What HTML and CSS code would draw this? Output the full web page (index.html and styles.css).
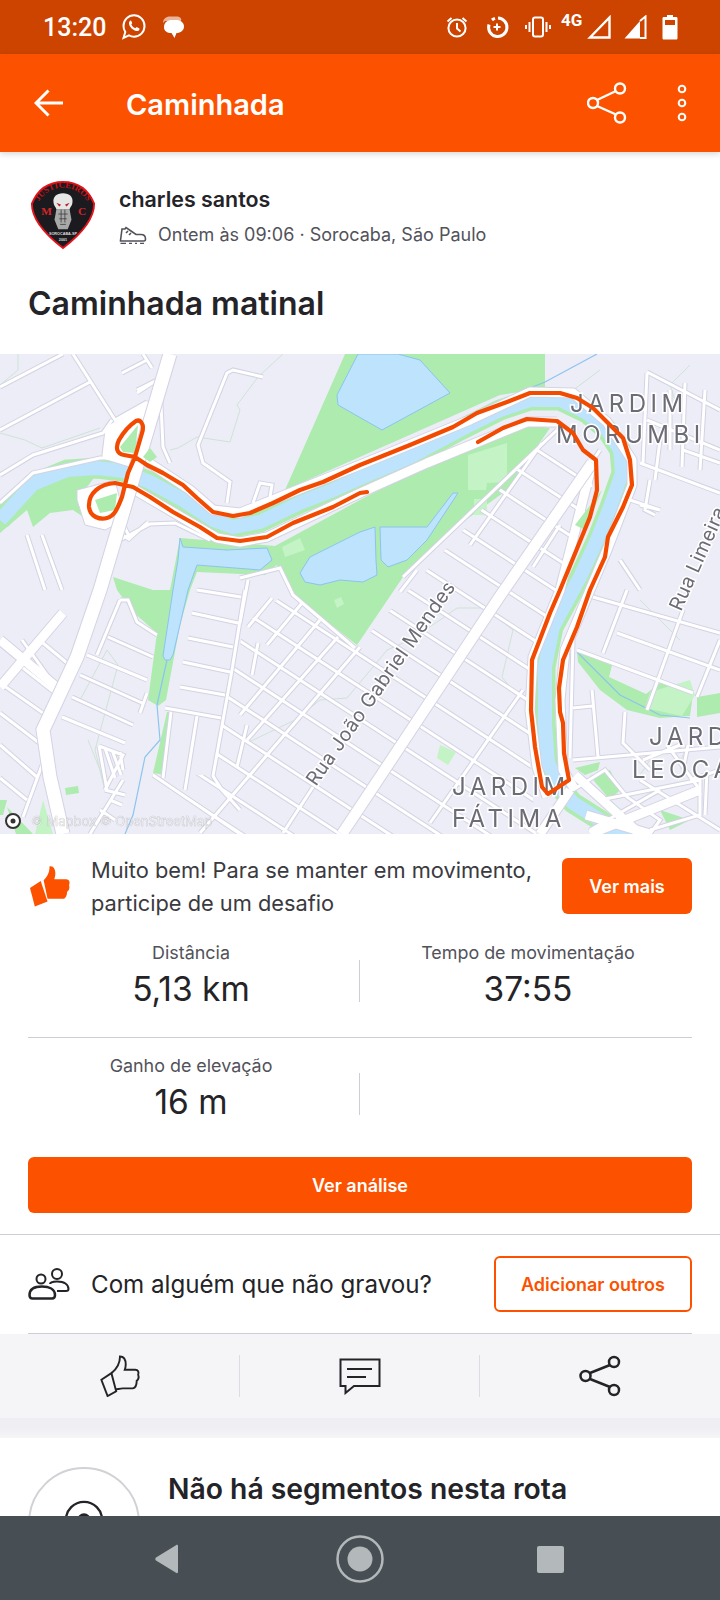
FILE: index.html
```html
<!DOCTYPE html>
<html lang="pt">
<head>
<meta charset="utf-8">
<title>Caminhada</title>
<link rel="stylesheet" href="styles.css">
</head>
<body>
<div class="phone">
  <div class="status">
    <div class="status-left">
      <span class="time">13:20</span>
      <svg class="st-whats" viewBox="0 0 26 28"><path class="i-w2" d="M2.500 25 4.300 19C3.200 17.200 2.500 15.200 2.500 13 2.500 7 7.200 2.300 13 2.300S23.500 7 23.500 13 18.800 23.700 13 23.700C11.100 23.700 9.500 23.200 8 22.400Z"/><path class="i-f" d="M9.300 7.700C8.400 8.400 7.800 9.500 8 10.700 8.500 14 12 17.400 15.500 18 16.800 18.200 18 17.600 18.400 16.500 18.600 15.800 18.500 15.500 18.200 15.300L15.900 14.200C15.500 14 15.300 14.200 15 14.600 14.700 15 14.400 15.300 14 15.100 12.400 14.300 11.200 13.200 10.500 11.800 10.300 11.400 10.500 11.100 10.800 10.800 11.200 10.400 11.300 10.100 11.100 9.700L10.300 7.900C10.100 7.500 9.700 7.400 9.300 7.700Z"/></svg>
      <svg class="st-msg" viewBox="0 0 24 26"><path class="i-f2" d="M2 9C2 5 5 2.500 9 2.500H15C19 2.500 21 4.500 20 7H4Z"/><path class="i-f" d="M3 13C3 8.500 6.500 6 11 6H15C19.500 6 23 8.500 23 12.500 23 16.500 19.500 19 15.500 19L13.500 24 10.500 19C6 19 3 17 3 13Z"/></svg>
    </div>
    <div class="status-right">
      <svg class="st-ic" viewBox="0 0 24 24"><circle class="i-w2" cx="12" cy="13" r="8.600"/><path class="i-w2" d="M12 8V13.500L15.500 16.500M2.500 6.500 6.500 3M21.500 6.500 17.500 3"/></svg>
      <svg class="st-ic" viewBox="0 0 24 24"><path class="i-w3" d="M13 3.100A9.200 9.200 0 1 1 4 9.500M7 5A9 9 0 0 1 10 3.300"/><path class="i-w2" d="M12 8.500V15.500M8.500 12H15.500"/></svg>
      <svg class="st-ic st-vib" viewBox="0 0 26 24"><rect class="i-w2" x="8" y="2.500" width="10" height="19" rx="2"/><path class="i-w2" d="M4.500 7V17M21.500 7V17M1 10V14M25 10V14"/></svg>
      <span class="st-4g">4G</span>
      <svg class="st-sig" viewBox="0 0 24 24"><path class="i-w25" d="M3 22.500 22.500 2.500V22.500Z"/></svg>
      <svg class="st-sig st-sig2" viewBox="0 0 24 24"><path class="i-f" d="M1.500 23.500 17 6V23.500Z"/><path class="i-w2" d="M17 6 22.500 1.500V23H17"/></svg>
      <svg class="st-bat" viewBox="0 0 16 26"><path class="i-f" d="M5 1H11V3H14C15 3 15.500 3.500 15.500 4.500V24C15.500 25 15 25.500 14 25.500H2C1 25.500 .5 25 .5 24V4.500C.5 3.500 1 3 2 3H5ZM3 6V11H13V6Z"/></svg>
    </div>
  </div>
  <div class="appbar">
    <svg class="ab-back" viewBox="0 0 30 28"><path class="i-w3" d="M29 14H2M14.500 1.500 2 14 14.500 26.500"/></svg>
    <h1 class="ab-title">Caminhada</h1>
    <svg class="ab-share" viewBox="0 0 40 42"><circle class="i-w25" cx="33" cy="6.500" r="5"/><circle class="i-w25" cx="33" cy="35.500" r="5"/><circle class="i-w25" cx="6" cy="21" r="5"/><path class="i-w25" d="M10 18 29 9M10 24 29 32.500"/></svg>
    <svg class="ab-more" viewBox="0 0 12 40"><circle class="i-w2" cx="6" cy="6" r="3.300"/><circle class="i-w2" cx="6" cy="20" r="3.300"/><circle class="i-w2" cx="6" cy="34" r="3.300"/></svg>
  </div>
  <main class="content">
    <section class="head">
      <svg class="avatar" viewBox="0 0 70 74">
        <path class="av-shield" d="M35 2C17 2 7 13 2 25 2 44 22 62 35 72 48 62 68 44 68 25 63 13 53 2 35 2Z"/>
        <path id="av-arc" class="av-none" d="M7 27C13 14 24 8 35 8 46 8 57 14 63 27"/>
        <text class="av-txt"><textPath href="#av-arc" startOffset="50%" text-anchor="middle">JUSTICEIROS</textPath></text>
        <text class="av-mc" x="12" y="37">M</text>
        <text class="av-mc" x="51" y="37">C</text>
        <path class="av-body" d="M28 31 26 42 30 52H40L44 42 42 31Z"/>
        <path class="av-dark" d="M33 31V45M37 31V45M30 36H40M31 41H39M32 47H38"/>
        <path class="av-skull" d="M35 14C28 14 24 18 25 24 25 27 28 29 28 31H42C42 29 45 27 45 24 46 18 42 14 35 14Z"/>
        <path class="av-eye" d="M28 24 33 26 31 28ZM42 24 37 26 39 28Z"/>
        <text class="av-small" x="35" y="58">SOROCABA-SP</text>
        <text class="av-small" x="35" y="65">2001</text>
      </svg>
      <div class="head-text">
        <div class="name">charles santos</div>
        <div class="meta">
          <svg class="shoe" viewBox="0 0 28 18"><path class="s-d" d="M1.500 14.500 3 3H6L7 1.500 12 5 17 8.500H22C25 8.500 26.500 10.500 26.500 13 26.500 14 26 15 25 15H1.500ZM9 5 7 7M12 7 10 9"/><path class="s-d" d="M1.500 17.500H7M10 17.500H13M16 17.500H18M21 17.500H25"/></svg>
          <span>Ontem às 09:06 · Sorocaba, São Paulo</span>
        </div>
      </div>
    </section>
    <h2 class="activity">Caminhada matinal</h2>

    <svg class="map" viewBox="0 354 720 480" preserveAspectRatio="none">
      <defs>
        <clipPath id="blocks"><path d="M552 432 359 645 290 590 244 625 212 775 153 775 240 834H536L530 760 530 660 560 590 592 490 592 462Z"/></clipPath>
        <g id="rd-grid">
          <path d="M180 218 620 504M180 250 620 536M180 282 620 568M180 314 620 600M180 346 620 632M180 378 620 664M180 410 620 696M180 442 620 728M180 474 620 760M180 506 620 792M180 538 620 824M180 570 620 856M180 602 620 888M180 634 620 920M180 666 620 952M180 698 620 984M180 730 620 1016M180 762 620 1048M180 794 620 1080M180 826 620 1112"/>
        </g>
        <g id="rd-minor">
          <path d="M360 647 200 833M338 637 247 740M320 620 240 715M302 603 267 645M272 598 248 627M247 725 237 767M258 643 252 675M313 787 283 833M523 690 430 823M560 525 533 567M542 443 470 545M557 430 403 577"/>
          <path d="M240 578 280 568 293 595 355 648M248 580 240 623M400 592 417 570"/>
          <path d="M0 387 63 354M0 430 90 382M73 354 117 423M0 475 33 455 103 433 112 420"/>
          <path d="M263 377 233 370 227 373 198 445 203 463 230 482 227 503M253 503 260 483 272 485 270 497"/>
          <path d="M122 373 147 360M143 354 152 368M137 390 157 380 137 393M160 383 163 447 170 463M115 420 147 402"/>
          <path d="M0 503 33 473 100 458 140 458"/>
          <path d="M122 522 130 538 148 522M120 540 150 524 175 523 210 540M118 532 130 540"/>
          <path d="M27 535 45 590M42 535 62 590"/>
          <path d="M197 590 241 597M192 613 238 623M188 638 233 647M183 662 230 672M180 687 225 695M165 708 221 718M245 590 232 670 213 776 222 790 240 810"/>
          <path d="M171 712 163 778M197 716 185 790M153 775 240 834"/>
          <path d="M120 600 97 655M120 600 128 600 137 622 157 635M108 637 153 657M87 655 147 680M80 675 142 703M72 697 133 725M62 717 125 743M147 693 140 713"/>
          <path d="M22 640 60 693M0 683 43 713M0 713 42 745M0 745 37 777M0 778 27 800M43 643 67 663M23 668 55 693M42 765 23 817"/>
          <path d="M99 746 107 790M105 748 115 778M112 750 121 775M120 752 123 770M99 746 123 755 105 790M123 780 90 834M105 790 125 795M110 800 122 805M100 810 115 820"/>
          <path d="M647 372 720 410M685 383 682 467M647 373 643 463M640 463 720 493M683 450 720 463M647 420 720 450M670 390 670 450M630 500 660 510 640 505M650 480 645 510 655 515"/>
          <path d="M705 390 700 470M660 440 655 480M620 560 640 590"/>
          <path d="M593 597 720 633M617 633 720 670M577 650 693 693M627 590 603 653M683 610 647 710M720 640 697 697"/>
          <path d="M573 640 570 758M573 708 592 706M592 690 598 757M625 712 623 743 650 770M573 760 720 747M643 760 680 745M667 745 700 790M690 780 720 770"/>
          <path d="M573 790 605 770 627 797 660 820 650 834M600 800 700 780 700 815 650 830M590 830 660 790M640 780 720 830"/>
          <path d="M707 770 705 815M688 745 683 770"/>
          <path d="M600 450 590 465"/>
        </g>
        <g id="rd-major">
          <path d="M150 405 110 430 107 455 130 462"/>
          <path d="M140 457 190 490 213 510 240 513 360 465 470 420 530 392 573 393 607 422 632 460 632 485 607 550 590 590 565 650 560 700 563 770 575 790"/>
          <path d="M130 487 217 538 240 542 267 537 360 493 427 463 527 422 557 422"/>
          <path d="M593 460 560 590 533 657 530 710 537 767 547 797"/>
          <path d="M586 815 650 834M570 790 540 834"/>
          <path d="M590 834 700 790M575 775 640 834"/>
          <path d="M0 640 60 690M63 613 0 687"/>
        </g>
      </defs>
      <rect class="m-land" x="0" y="354" width="720" height="480"/>
      <path class="m-contour" d="M0 385 18 370 18 354M0 433 25 440 42 448 100 428M170 450 178 448 197 437 230 442 240 410 237 405 258 377 283 354M80 700 107 650 118 665 95 750 105 790 100 770 88 740M247 743 295 720 320 700 347 698 373 667 387 650 410 640 440 620 457 608 485 608 513 630 502 677 520 700M560 400 600 370M690 365 670 385 675 400M680 640 640 600M680 760 690 745M650 760 640 775"/>
      <path class="m-green" d="M345 354H545V388L500 395 285 490Z"/>
      <path class="m-green" d="M550 428 507 490 463 522 403 577 357 645 293 595 280 568 270 560 275 546 360 500 460 448 530 425Z"/>
      <path class="m-green" d="M0 533 27 510 33 527 50 513 73 510 103 530 108 520 77 500 100 470 60 470 0 510Z"/>
      <path class="m-green" d="M113 577 153 590 190 590 180 625 166 700 158 706 148 700 157 633 133 612 117 590Z"/>
      <path class="m-green" d="M167 712 172 712 165 775 153 773Z"/>
      <path class="m-green" d="M180 538 275 546 280 562 265 575 197 572 190 590H170Z"/>
      <path class="m-green" d="M577 652 612 665 609 677 646 694 660 683 693 694 690 716 660 718 627 710 600 690 578 662Z"/>
      <path class="m-green" d="M697 697 720 693V713L697 717Z"/>
      <path class="m-green" d="M0 800H7L3 815H0ZM7 807 33 834H16ZM65 788 78 786 79 793 66 795ZM575 768 600 762 598 770 585 775Z"/>
      <path class="m-green" d="M590 776 610 770 620 790 610 800ZM660 810 690 820 670 830Z"/>
      <path class="m-bank" d="M0 520 33 484 67 470 97 468 123 471 150 482 183 500 213 520 233 527 260 522 300 503 333 490 360 478 410 457 460 430 500 410 530 400 560 400 587 413 607 430 620 450 622 473 610 507 597 540 580 577 553 627 545 667 545 723 548 763 560 787 573 803 600 820 627 840"/>
      <path class="m-light" d="M468 455 507 443 507 482 487 483 486 490 468 490ZM474 499H487V515H474ZM282 547 300 538 305 550 285 557ZM650 692 690 680 695 695 682 716 645 708ZM35 834 43 800 53 834ZM440 745 456 752 448 765 437 758ZM334 600 341 597 344 604 337 608Z"/>
      <path class="m-lake" d="M358 354H398L420 360 450 393 382 430 338 405 337 395Z"/>
      <path class="m-lake" d="M360 532 375 527 376 560 377 575 363 582 340 580 320 585 305 582 300 573 310 557Z"/>
      <path class="m-lake" d="M380 527H427L453 493H458L427 540 407 560 388 567 381 560Z"/>
      <path class="m-lake" d="M180 538 183 547 227 550 267 548 272 560 260 570 197 565 188 590 173 655 170 660 165 660 163 656 173 590 178 560Z"/>
      <path class="m-river" d="M0 520 33 484 67 470 97 468 123 471 150 482 183 500 213 520 233 527 260 522 300 503 333 490 360 478 410 457 460 430 500 410 530 400 560 400 587 413 607 430 620 450 622 473 610 507 597 540 580 577 553 627 545 667 545 723 548 763 560 787 573 803 600 820 627 840"/>
      <path class="m-stream" d="M157 705 160 740 145 757 133 815 125 834M577 652 620 695 660 715 690 718M530 388 545 382 597 354M167 660 157 705"/>
      <g clip-path="url(#blocks)"><use href="#rd-grid" class="r-case"/></g>
      <use href="#rd-minor" class="r-case"/>
      <use href="#rd-major" class="r-case-b"/>
      <path class="r-island-c" d="M107 430 145 405 150 440 135 458 107 455ZM77 490 115 480 125 520 105 530 85 525 77 500Z"/>
      <g clip-path="url(#blocks)"><use href="#rd-grid" class="r-fill"/></g>
      <use href="#rd-minor" class="r-fill"/>
      <use href="#rd-major" class="r-fill-b"/>
      <path class="r-ns-c" d="M170 354 100 590 77 657 57 700 43 730 50 777 63 834"/>
      <path class="r-diag-c" d="M592 463 500 596 360 807 342 834"/>
      <path class="r-ns" d="M170 354 100 590 77 657 57 700 43 730 50 777 63 834"/>
      <path class="r-diag" d="M592 463 500 596 360 807 342 834"/>
      <path class="m-green" d="M143 457 150 448 157 457 150 462ZM120 447 138 425 135 453 123 452ZM95 500 117 493 115 510 100 513Z"/>
      <path class="m-green" d="M598 495 602 490 585 530 575 525Z"/>
      <text class="m-place" x="570" y="412">JARDIM</text>
      <text class="m-place" x="556" y="443">MORUMBI</text>
      <text class="m-place" x="649" y="745">JARD</text>
      <text class="m-place" x="632" y="778">LEOCA</text>
      <text class="m-place" x="452" y="795">JARDIM</text>
      <text class="m-place" x="452" y="827">FÁTIMA</text>
      <text class="m-street" transform="translate(316 787) rotate(-55)">Rua João Gabriel Mendes</text>
      <text class="m-street" transform="translate(681 612) rotate(-66)">Rua Limeira</text>
      <path class="m-route" d="M367 492 360 493 333 507 293 523 267 537 240 541 217 538 200 527 173 512 150 497 133 487 115 483C100 484 88 493 89 507 90 517 100 520 107 518 115 516 118 507 122 497L128 473 135 457 142 433C145 424 140 419 136 421 130 425 123 433 119 440 115 448 117 454 124 455L135 457 147 465 163 473 183 485 197 498 213 512 233 516 250 513 273 503 300 490 323 482 360 465 380 457 410 445 453 427 477 413 507 402 530 393 560 393 577 398 593 408 607 422 623 438 630 460 632 485 623 507 608 537 605 557 590 590 577 627 563 660 559 688 560 712 563 723 564 753 569 780 548 794 542 787 535 747 531 710 532 660 550 613 560 590 590 517 597 490 596 460 583 450 573 433 557 421 527 419 503 428 478 442"/>
      <circle class="m-attr-o" cx="13" cy="821" r="7"/>
      <circle class="m-attr-i" cx="13" cy="821" r="2.500"/>
      <text class="m-attr" x="31" y="826">© Mapbox © OpenStreetMap</text>
    </svg>

    <section class="promo">
      <svg class="promo-ic" viewBox="0 0 42 42"><path class="i-o" d="M1 23 12 16 19 37 6 42Z"/><path class="i-o" d="M15 15C20 10 21 6 21 1 25 0 27 4 27 8 27 11 26 14 26 14H38C42 14 42 18 41 20 42 23 41 26 39 27 39 30 38 33 36 34H24C21 34 19 34 19 34Z"/></svg>
      <p class="promo-text">Muito bem! Para se manter em movimento, participe de um desafio</p>
      <span class="btn btn-small">Ver mais</span>
    </section>

    <section class="stats">
      <div class="stat-row">
        <div class="stat stat-l"><div class="s-label">Distância</div><div class="s-value">5,13 km</div></div>
        <div class="stat stat-r"><div class="s-label">Tempo de movimentação</div><div class="s-value">37:55</div></div>
      </div>
      <div class="stat-row stat-row2">
        <div class="stat stat-l"><div class="s-label">Ganho de elevação</div><div class="s-value">16 m</div></div>
        <div class="stat stat-r"></div>
      </div>
    </section>

    <div class="btn btn-wide">Ver análise</div>

    <section class="others">
      <svg class="people" viewBox="0 0 42 32"><circle class="d-2" cx="13" cy="11" r="4.500"/><circle class="d-2" cx="29" cy="6" r="5"/><path class="d-2" d="M22 16C22 15 24 13.500 29 13.500 37 13.500 40.500 17 40.500 21 40.500 22.500 39.500 23 38 23H29"/><path class="d-25" d="M1.500 27C1.500 21 7 18.500 14 18.500 21 18.500 27 21 27 27 27 29.500 26 30.500 24 30.500H4.500C2.500 30.500 1.500 29.500 1.500 27Z"/></svg>
      <span class="others-text">Com alguém que não gravou?</span>
      <span class="btn-outline">Adicionar outros</span>
    </section>

    <div class="rule"></div>
    <section class="actions">
      <div class="act"><svg class="act-ic" viewBox="0 0 42 44"><path class="d-2" d="M1.500 26 12 19 17 38 8 43Z"/><path class="d-2" d="M12 19C17 15 21 9 21 1.500 25.500 1.500 27 6 27 10 27 13 26 15.500 26 15.500H37C40 15.500 41 18 40 20.500 41 23.500 40 26 38.500 27 38.500 31 37 34.500 34.500 35H24C21 35 18 36 16 36"/></svg></div>
      <div class="act"><svg class="act-ic act-msg" viewBox="0 0 42 37"><path class="d-2" d="M1.500 1.500H40.500V28H15L6.500 35V28H1.500Z"/><path class="d-2" d="M8 11H33M8 19H27"/></svg></div>
      <div class="act"><svg class="act-ic" viewBox="0 0 42 42"><circle class="d-25" cx="35" cy="7" r="5"/><circle class="d-25" cx="35" cy="35" r="5"/><circle class="d-25" cx="6.500" cy="21" r="5"/><path class="d-25" d="M11 18 31 10M11 24 31 32"/></svg></div>
    </section>
    <div class="gap"></div>
    <section class="segments">
      <div class="seg-circle"><svg class="seg-ic" viewBox="0 0 42 42"><circle class="d-25" cx="21" cy="21" r="19"/><circle class="d-f" cx="21" cy="21" r="7"/></svg></div>
      <h3 class="seg-title">Não há segmentos nesta rota</h3>
    </section>
  </main>
  <nav class="navbar">
    <svg class="nav-back" viewBox="0 0 26 30"><path class="n-f" d="M24 2V28C24 29 23 29.500 22 28.800L2 16.500C1 15.500 1 14.500 2 13.500L22 1.200C23 .5 24 1 24 2Z"/></svg>
    <svg class="nav-home" viewBox="0 0 50 50"><circle class="n-o" cx="25" cy="25" r="22.500"/><circle class="n-f" cx="25" cy="25" r="12.500"/></svg>
    <div class="nav-sq"></div>
  </nav>
</div>
</body>
</html>
```
FILE: styles.css
```css
* { box-sizing: border-box; }
html, body { margin: 0; padding: 0; background: #fff; }
body { font-family: Inter, "Noto Sans", sans-serif; color: #242428; }
.phone { width: 720px; height: 1600px; display: flex; flex-direction: column; overflow: hidden; }

.status { height: 54px; flex: none; background: #cc4400; display: flex; justify-content: space-between; align-items: center; padding: 0 42px 0 43px; color: #fff; }
.status-left, .status-right { display: flex; align-items: center; }
.time { font: 500 25px Roboto, sans-serif; width: 78px; }
.st-whats { width: 26px; height: 28px; }
.st-msg { width: 24px; height: 26px; margin-left: 14px; }
.st-ic { width: 24px; height: 24px; margin-right: 16px; }
.st-vib { width: 26px; margin-right: 10px; }
.st-4g { font: 700 17px Roboto, sans-serif; width: 26px; margin: -14px 0 0 0; }
.st-sig { width: 24px; height: 24px; }
.st-sig2 { margin-left: 12px; }
.st-bat { width: 16px; height: 26px; margin-left: 15px; }
.i-w2, .i-w25, .i-w3 { fill: none; stroke: #fff; stroke-width: 2; }
.i-w25 { stroke-width: 2.400; }
.i-w3 { stroke-width: 3; }
.i-f { fill: #fff; }
.i-f2 { fill: #fff; opacity: .6; }

.appbar { height: 98px; flex: none; background: #fc5200; display: flex; align-items: center; padding: 0 32px 0 34px; box-shadow: 0 2px 6px rgba(0,0,0,.16); position: relative; }
.ab-back { width: 30px; height: 28px; }
.ab-title { margin: 2px 0 0 62px; flex: 1; font: 600 29px Inter, sans-serif; color: #fff; }
.ab-share { width: 40px; height: 42px; }
.ab-more { width: 12px; height: 40px; margin-left: 49px; }

.content { flex: 1; min-height: 0; overflow: hidden; background: #fff; }
.head { display: flex; padding: 28px 28px 0 30px; height: 102px; }
.avatar { width: 66px; height: 70px; flex: none; }
.av-shield { fill: #1b1a1e; stroke: #e3141c; stroke-width: 2; }
.av-none { fill: none; }
.av-txt { font: 700 9px "Liberation Serif", serif; fill: #c5141a; letter-spacing: .2px; }
.av-mc { font: 700 12px "Liberation Serif", serif; fill: #d5262a; }
.av-skull { fill: #e6e6e6; }
.av-eye { fill: #b02018; }
.av-body { fill: #a8a8a8; }
.av-dark { fill: none; stroke: #3a3a3a; stroke-width: .8; }
.av-small { font: 700 4px "Liberation Sans", sans-serif; fill: #ddd; text-anchor: middle; }
.head-text { margin-left: 23px; }
.name { font: 600 21.400px/24px Inter, sans-serif; margin-top: 7px; color: #242428; }
.meta { display: flex; align-items: center; margin-top: 12px; font: 400 18px/24px Inter, sans-serif; color: #52525a; }
.shoe { width: 28px; height: 18px; margin-right: 11px; }
.s-d { fill: none; stroke: #52525a; stroke-width: 1.600; }
.activity { margin: 0; padding: 30px 28px 0; height: 100px; font: 600 32px/40px Inter, sans-serif; color: #242428; }

.map { display: block; width: 720px; height: 480px; filter: blur(.45px); }
.m-land { fill: #ededf7; }
.m-contour { fill: none; stroke: #cfe3d6; stroke-width: 1; }
.m-green { fill: #adebae; }
.m-light { fill: #c4f3c6; }
.m-lake { fill: #bde3fd; stroke: #8cc4ef; stroke-width: 1; }
.m-bank { fill: none; stroke: #adebae; stroke-width: 21; }
.m-river { fill: none; stroke: #bde3fd; stroke-width: 14; }
.m-stream { fill: none; stroke: #8cc4ef; stroke-width: 1.200; }
.r-case { fill: none; stroke: #d3d3e4; stroke-width: 5; }
.r-fill { fill: none; stroke: #fff; stroke-width: 3; }
.r-case-b { fill: none; stroke: #d3d3e4; stroke-width: 11; stroke-linejoin: round; }
.r-fill-b { fill: none; stroke: #fff; stroke-width: 9; stroke-linejoin: round; }
.r-island-c { fill: #fff; stroke: #d3d3e4; stroke-width: 1; }
.r-ns-c { fill: none; stroke: #d3d3e4; stroke-width: 15; }
.r-ns { fill: none; stroke: #fff; stroke-width: 13; }
.r-diag-c { fill: none; stroke: #d3d3e4; stroke-width: 12.500; }
.r-diag { fill: none; stroke: #fff; stroke-width: 10.500; }
.m-route { fill: none; stroke: #f24a00; stroke-width: 4.200; stroke-linejoin: round; stroke-linecap: round; }
.m-place { font: 400 24px Inter, sans-serif; letter-spacing: 4.500px; fill: #6c6c76; stroke: #fff; stroke-width: 3px; paint-order: stroke; }
.m-street { font: 400 19.500px Inter, sans-serif; letter-spacing: .3px; fill: #6c6c76; stroke: #fff; stroke-width: 3px; paint-order: stroke; }
.m-attr { font: 400 13px Inter, sans-serif; fill: #fff; fill-opacity: .7; stroke: #77777f; stroke-opacity: .3; stroke-width: .6px; }
.m-attr-o { fill: #fff; stroke: #333; stroke-width: 2; }
.m-attr-i { fill: #333; }

.promo { display: flex; align-items: flex-start; padding: 24px 28px 0 29px; height: 94px; }
.promo-ic { width: 41px; height: 42px; flex: none; margin-top: 7px; }
.i-o { fill: #fc5200; }
.promo-text { margin: -4px 0 0 21px; width: 450px; font: 400 21.800px/32.500px Inter, sans-serif; color: #3a3a40; flex: none; }
.btn { background: #fc5200; color: #fff; font: 600 18px Inter, sans-serif; border-radius: 6px; display: flex; align-items: center; justify-content: center; }
.btn-small { width: 130px; height: 56px; margin-left: 21px; flex: none; }
.btn-wide { margin: 0 28px; height: 56px; }

.stats { padding: 0 28px; }
.stat-row { display: grid; grid-template-columns: 332px 332px; height: 110px; border-bottom: 1px solid #cdcdd8; }
.stat-row2 { border-bottom: 0; height: 119px; }
.stat { position: relative; text-align: center; padding-top: 13px; }
.stat-l { padding-right: 6px; }
.stat-r { padding-left: 4px; }
.stat-l::after { content: ""; position: absolute; right: 0; top: 32px; height: 42px; width: 1px; background: #cdcdd8; }
.s-label { font: 400 17.900px/24px Inter, sans-serif; color: #52525a; }
.s-value { font: 400 33.500px/40px Inter, sans-serif; color: #242428; margin-top: 4px; }
.stat-row2 .stat { padding-top: 16px; }
.stat-row2 .stat-l::after { top: 35px; }

.others { display: flex; align-items: center; height: 99px; margin-top: 21px; padding: 0 28px; border-top: 1px solid #cdcdd8; }
.people { width: 42px; height: 32px; flex: none; }
.others-text { margin-left: 21px; font: 400 24.150px Inter, sans-serif; color: #242428; flex: 1; }
.btn-outline { width: 198px; height: 56px; border: 2px solid #fc5200; border-radius: 6px; color: #fc5200; font: 600 18px Inter, sans-serif; display: flex; align-items: center; justify-content: center; }
.d-2, .d-25 { fill: none; stroke: #242428; stroke-width: 2; }
.d-25 { stroke-width: 2.500; }
.d-f { fill: #242428; }
.rule { height: 1px; margin: 0 28px; background: #cdcdd8; }
.actions { display: grid; grid-template-columns: 240px 240px 240px; height: 84px; background: #f5f5f8; align-items: center; }
.act { height: 42px; display: flex; justify-content: center; align-items: center; border-right: 1px solid #dcdce3; }
.act:last-child { border-right: 0; }
.act-ic { width: 42px; height: 42px; }
.act-msg { height: 37px; }
.gap { height: 20px; background: linear-gradient(#eeeef3 50%, #f6f6f8); }
.segments { display: flex; align-items: flex-start; padding: 29px 28px 0; }
.seg-circle { width: 112px; height: 112px; border: 2px solid #d2d2d6; border-radius: 50%; flex: none; display: flex; align-items: center; justify-content: center; }
.seg-ic { width: 40px; height: 40px; margin-top: -6px; }
.seg-title { margin: 4px 0 0 28px; font: 600 28.300px/36px Inter, sans-serif; color: #242428; }

.navbar { height: 84px; flex: none; background: #474e54; display: flex; align-items: center; padding: 2px 0 0 154px; }
.nav-back { width: 26px; height: 30px; }
.nav-home { width: 50px; height: 50px; margin-left: 155px; }
.n-f { fill: #b3b8ba; }
.n-o { fill: none; stroke: #b3b8ba; stroke-width: 2.500; }
.nav-sq { width: 27px; height: 27px; background: #b3b8ba; border-radius: 2px; margin-left: 152px; }
```
